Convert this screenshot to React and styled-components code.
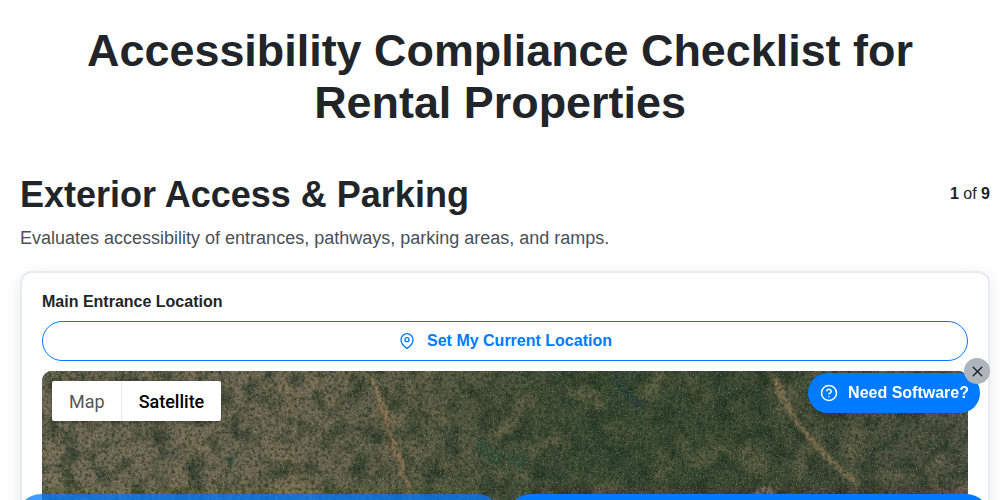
import styled, { createGlobalStyle } from "styled-components";
import { FiHelpCircle, FiMapPin, FiX } from "react-icons/fi";

const GlobalStyle = createGlobalStyle`
  * {
    box-sizing: border-box;
  }
  html, body {
    margin: 0;
    height: 500px;
    overflow: hidden;
    background: #fff;
    font-family: "Liberation Sans", Arial, sans-serif;
    color: #212529;
  }
`;

const Page = styled.div`
  padding: 25px 10px 0 20px;
`;

const Title = styled.h1`
  margin: 0 0 44px;
  padding: 0 30px 0 20px;
  text-align: center;
  font-size: 44.9px;
  line-height: 52px;
  font-weight: 700;
`;

const SectionHeader = styled.div`
  display: flex;
  justify-content: space-between;
  align-items: flex-start;
`;

const SectionTitle = styled.h2`
  margin: 0;
  font-size: 36px;
  line-height: 43px;
  font-weight: 700;
`;

const Progress = styled.div`
  margin-top: 11px;
  font-size: 16px;
  line-height: 19px;
  b {
    font-weight: 700;
  }
`;

const Description = styled.p`
  margin: 11px 0 22px;
  font-size: 18px;
  line-height: 22px;
  color: #495057;
`;

const Card = styled.div`
  padding: 19px 20px 20px;
  height: 600px;
  background: #fff;
  border: 2px solid #e9ecef;
  border-radius: 12px;
  box-shadow: 0 4px 16px rgba(0, 0, 50, 0.09);
`;

const FieldLabel = styled.label`
  display: block;
  margin-bottom: 10px;
  font-size: 16px;
  line-height: 19px;
  font-weight: 700;
`;

const LocationButton = styled.button`
  display: flex;
  width: 100%;
  height: 40px;
  align-items: center;
  justify-content: center;
  gap: 12px;
  margin-bottom: 10px;
  padding: 0 0 0 1px;
  background: #fff;
  border: 1px solid #007bff;
  border-radius: 20px;
  color: #007bff;
  font-family: inherit;
  font-size: 16px;
  font-weight: 700;
`;

const MapFrame = styled.div`
  position: relative;
  height: 400px;
  overflow: hidden;
  border-radius: 10px;
  background: #56573f;
`;

const MapImage = styled.svg`
  display: block;
  width: 100%;
  height: 100%;
`;

const MapTypes = styled.div`
  position: absolute;
  top: 10px;
  left: 10px;
  display: flex;
  height: 40px;
  background: #fff;
  border-radius: 2px;
  box-shadow: 0 1px 4px rgba(0, 0, 0, 0.3);
`;

const MapType = styled.div`
  display: flex;
  align-items: center;
  padding: ${(p) => (p.$active ? "0 17px" : "0 16px 0 17px")};
  font-family: Roboto, sans-serif;
  font-size: 18px;
  font-weight: ${(p) => (p.$active ? 500 : 400)};
  color: ${(p) => (p.$active ? "#000" : "#565656")};
  & + & {
    border-left: 1px solid #e6e6e6;
  }
`;

const FooterNav = styled.div`
  position: fixed;
  top: 494px;
  left: 16px;
  right: 9px;
  display: flex;
  gap: 4px;
`;

const NavButton = styled.button`
  flex: 1;
  height: 50px;
  border: 0;
  border-radius: 25px;
  background: ${(p) => (p.$primary ? "#007bff" : "rgba(0, 123, 255, 0.75)")};
`;

const HelpWidget = styled.div`
  position: fixed;
  top: 373px;
  right: 20px;
  display: flex;
  align-items: center;
  gap: 10px;
  height: 40px;
  padding: 0 11px 0 12px;
  background: #007bff;
  border-radius: 20px;
  color: #fff;
  font-size: 16px;
  font-weight: 700;
`;

const CloseBadge = styled.div`
  position: absolute;
  top: -15px;
  right: -10px;
  display: flex;
  width: 26px;
  height: 26px;
  align-items: center;
  justify-content: center;
  background: #adb5bd;
  border-radius: 50%;
  color: #212529;
`;

const SatelliteMap = () => (
  <MapImage viewBox="0 0 926 400" preserveAspectRatio="none">
    <defs>
      <linearGradient id="land" x1="0" x2="1" y1="0" y2="0">
        <stop offset="0" stopColor="#736c58" />
        <stop offset="0.28" stopColor="#6f6853" />
        <stop offset="0.45" stopColor="#545841" />
        <stop offset="0.6" stopColor="#394a32" />
        <stop offset="0.76" stopColor="#3d4b33" />
        <stop offset="1" stopColor="#525443" />
      </linearGradient>
      <filter id="lightGrain" x="0" y="0" width="100%" height="100%" colorInterpolationFilters="sRGB">
        <feTurbulence type="fractalNoise" baseFrequency="0.7" numOctaves="2" seed="4" />
        <feColorMatrix
          type="matrix"
          values="0 0 0 0 0.78  0 0 0 0 0.77  0 0 0 0 0.7  2.8 0 0 0 -1.5"
        />
      </filter>
      <filter id="fineDark" x="0" y="0" width="100%" height="100%" colorInterpolationFilters="sRGB">
        <feTurbulence type="fractalNoise" baseFrequency="0.3" numOctaves="3" seed="21" />
        <feColorMatrix
          type="matrix"
          values="0 0 0 0 0.1  0 0 0 0 0.16  0 0 0 0 0.1  0 0 3 0 -1.3"
        />
      </filter>
      <filter id="clusters" x="0" y="0" width="100%" height="100%" colorInterpolationFilters="sRGB">
        <feTurbulence type="fractalNoise" baseFrequency="0.055" numOctaves="5" seed="11" />
        <feColorMatrix
          type="matrix"
          values="0 0 0 0 0.1  0 0 0 0 0.18  0 0 0 0 0.11  0 2.4 0 0 -1.05"
        />
      </filter>
      <filter id="patches" x="0" y="0" width="100%" height="100%" colorInterpolationFilters="sRGB">
        <feTurbulence type="fractalNoise" baseFrequency="0.03" numOctaves="4" seed="7" />
        <feColorMatrix
          type="matrix"
          values="0 0 0 0 0.58  0 0 0 0 0.5  0 0 0 0 0.36  4 0 0 0 -2"
        />
      </filter>
      <filter id="rough" x="-10%" y="-10%" width="120%" height="120%" colorInterpolationFilters="sRGB">
        <feTurbulence type="fractalNoise" baseFrequency="0.07" numOctaves="4" seed="3" />
        <feDisplacementMap in="SourceGraphic" scale="16" />
        <feGaussianBlur stdDeviation="1" />
      </filter>
    </defs>
    <rect width="926" height="400" fill="url(#land)" />
    <rect width="926" height="400" filter="url(#patches)" opacity="0.35" />
    <rect width="926" height="400" filter="url(#clusters)" opacity="0.7" />
    <g filter="url(#rough)" fill="none" strokeLinecap="round" opacity="0.75">
      <path d="M330 6 C340 35 350 65 358 92 C365 120 372 140 382 158" stroke="#9a7a58" strokeWidth="4" />
      <path d="M733 8 C740 30 752 50 775 75 C790 92 800 100 815 112" stroke="#8d7655" strokeWidth="6" />
      <path d="M640 200 C665 160 690 130 725 118 C745 140 740 180 725 215" stroke="#7b7460" strokeWidth="7" />
      <path d="M800 130 C812 170 822 195 832 225" stroke="#2c4329" strokeWidth="12" />
      <path d="M575 8 C582 22 592 30 600 33" stroke="#2a4140" strokeWidth="6" />
      <path d="M188 80 L188 96" stroke="#24483f" strokeWidth="4" />
      <path d="M240 130 C248 150 252 170 250 190" stroke="#2d3d2b" strokeWidth="3" />
      <path d="M440 75 C450 88 465 92 480 88" stroke="#33503b" strokeWidth="10" />
      <path d="M76 120 L84 140" stroke="#93775c" strokeWidth="5" />
      <path d="M354 178 L360 180" stroke="#10160f" strokeWidth="5" />
    </g>
    <rect width="926" height="400" filter="url(#fineDark)" opacity="0.6" />
    <rect width="926" height="400" filter="url(#lightGrain)" opacity="0.4" />
  </MapImage>
);

const App = () => (
  <>
    <GlobalStyle />
    <Page>
      <Title>Accessibility Compliance Checklist for Rental Properties</Title>
      <SectionHeader>
        <SectionTitle>Exterior Access &amp; Parking</SectionTitle>
        <Progress>
          <b>1</b> of <b>9</b>
        </Progress>
      </SectionHeader>
      <Description>
        Evaluates accessibility of entrances, pathways, parking areas, and ramps.
      </Description>
      <Card>
        <FieldLabel>Main Entrance Location</FieldLabel>
        <LocationButton>
          <FiMapPin size={16} />
          Set My Current Location
        </LocationButton>
        <MapFrame>
          <SatelliteMap />
          <MapTypes>
            <MapType>Map</MapType>
            <MapType $active>Satellite</MapType>
          </MapTypes>
        </MapFrame>
      </Card>
    </Page>
    <FooterNav>
      <NavButton />
      <NavButton $primary />
    </FooterNav>
    <HelpWidget>
      <FiHelpCircle size={18} />
      Need Software?
      <CloseBadge>
        <FiX size={17} />
      </CloseBadge>
    </HelpWidget>
  </>
);

export default App;
